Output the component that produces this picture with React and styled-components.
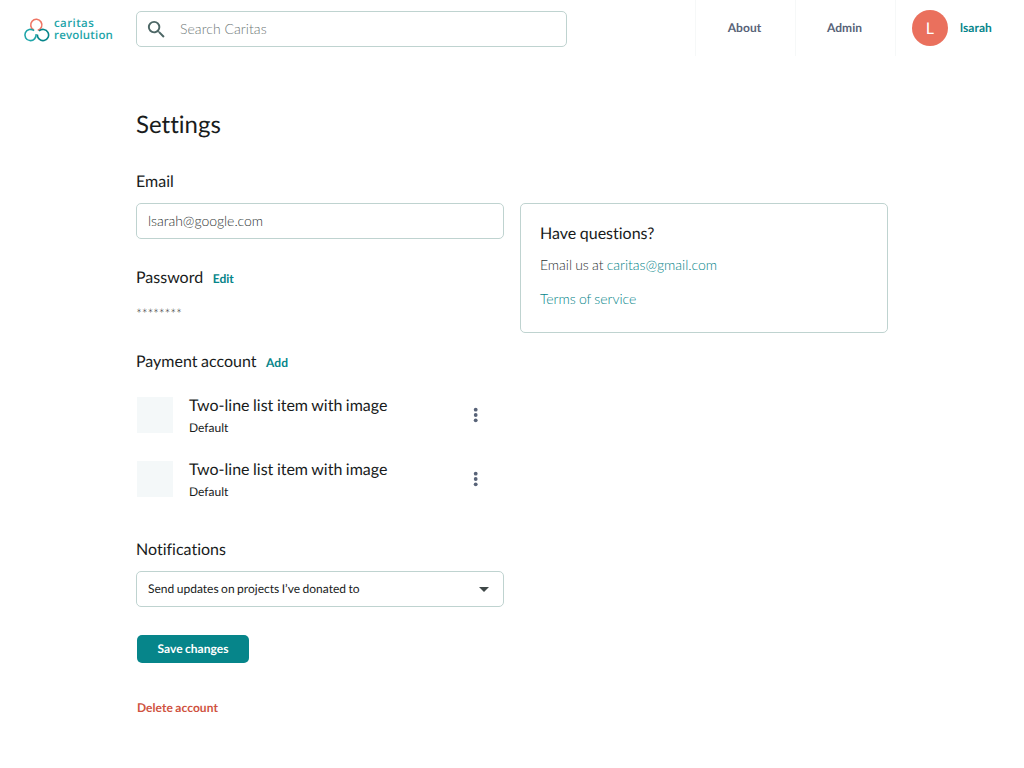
import React from 'react';
import styled, { createGlobalStyle } from 'styled-components';

const Global = createGlobalStyle`
  *, *::before, *::after { box-sizing: border-box; }
  body {
    margin: 0;
    background: #fff;
    color: #191c1c;
    font-family: Lato, "Liberation Sans", sans-serif;
    font-variant-ligatures: none;
    text-rendering: geometricPrecision;
    word-spacing: -0.55px;
  }
  a { text-decoration: none; color: inherit; }
  button {
    font: inherit;
    font-variant-ligatures: none;
    border: 0;
    padding: 0;
    background: none;
    cursor: pointer;
    text-rendering: inherit;
    word-spacing: inherit;
  }
  h1, h2, p, ul { margin: 0; padding: 0; font-weight: 400; }
`;

const Page = styled.div`
  width: 1024px;
  height: 768px;
  overflow: hidden;
`;

const Header = styled.header`
  display: flex;
  align-items: flex-start;
  height: 56px;
`;

const Brand = styled.a`
  display: flex;
  width: 136px;
  padding: 17px 0 0 23px;
  gap: 4px;
`;

const BrandMark = styled.svg`
  width: 27px;
  height: 26px;
`;

const BrandName = styled.span`
  display: block;
  height: 12px;
  font-family: "Open Sans", sans-serif;
  font-size: 11.5px;
  font-weight: 600;
  line-height: 13px;
  letter-spacing: ${(p) => p.$spacing};
  color: #1ea5a9;
`;

const Search = styled.label`
  display: flex;
  align-items: center;
  width: 431px;
  height: 36px;
  margin-top: 11px;
  padding-left: 8px;
  gap: 12px;
  border: 1px solid #bfd3d0;
  border-radius: 5px;
`;

const TextInput = styled.input`
  flex: 1;
  min-width: 0;
  height: 100%;
  padding: 0 0 2px;
  border: 0;
  outline: 0;
  background: none;
  font: 300 14px/20px Lato, sans-serif;
  letter-spacing: ${(p) => p.$spacing || 'normal'};
  text-rendering: inherit;
  color: #2f3636;
  &::placeholder { color: #6f7979; opacity: 1; }
`;

const Nav = styled.nav`
  display: flex;
  height: 56px;
  margin-left: auto;
`;

const NavItem = styled.a`
  display: flex;
  align-items: center;
  justify-content: center;
  width: 100px;
  padding: 0 2px 2px 0;
  border-left: 1px solid #f6f8f8;
  font-size: 12px;
  font-weight: 700;
  letter-spacing: 0.05px;
  color: #586378;
`;

const Account = styled(NavItem)`
  justify-content: flex-start;
  width: 129px;
  padding: 0 0 0 16px;
  gap: 12px;
  color: #06858a;
`;

const AccountName = styled.span`
  padding-bottom: 2px;
`;

const Avatar = styled.span`
  display: grid;
  place-items: center;
  width: 36px;
  height: 36px;
  border-radius: 50%;
  background: #ea705d;
  color: #fff;
  font-size: 16px;
  font-weight: 400;
`;

const Main = styled.main`
  padding: 53px 136px 0;
`;

const Title = styled.h1`
  font-size: 24px;
  line-height: 32px;
`;

const Columns = styled.div`
  display: grid;
  grid-template-columns: 368px 368px;
  gap: 16px;
  align-items: start;
  margin-top: 28px;
`;

const Section = styled.section`
  margin-bottom: ${(p) => p.$after}px;
`;

const SectionHead = styled.div`
  display: flex;
  align-items: baseline;
  height: 24px;
  gap: 9.5px;
`;

const Heading = styled.h2`
  height: 24px;
  font-size: 16px;
  line-height: 26px;
`;

const TextButton = styled.button`
  font-size: 12px;
  font-weight: 700;
  line-height: 20px;
  letter-spacing: 0.05px;
  color: ${(p) => (p.$danger ? '#cf5341' : '#06858a')};
`;

const Field = styled.div`
  display: flex;
  align-items: center;
  justify-content: space-between;
  height: 36px;
  margin-top: 10px;
  padding: 0 7px 0 11px;
  border: 1px solid #bfd3d0;
  border-radius: 5px;
  font-size: 12px;
`;

const FieldValue = styled.span`
  padding-bottom: 2px;
`;

const Masked = styled.p`
  margin-top: 13px;
  font-size: 14px;
  font-weight: 300;
  line-height: 24px;
  letter-spacing: -0.25px;
  color: #191c1c;
`;

const AccountList = styled.ul`
  display: grid;
  gap: 20px;
  margin-top: 20px;
  list-style: none;
`;

const AccountRow = styled.li`
  display: flex;
  align-items: center;
  height: 44px;
  padding: 0 16px 0 1px;
`;

const Thumb = styled.div`
  width: 36px;
  height: 36px;
  margin-right: 16px;
  background: #f4f8f9;
`;

const RowText = styled.div`
  flex: 1;
`;

const RowNote = styled.p`
  height: 20px;
  font-size: 12px;
  line-height: 22px;
`;

const IconButton = styled.button`
  display: flex;
  color: #586378;
`;

const SaveButton = styled.button`
  display: block;
  width: 112px;
  height: 28px;
  margin: 0 0 35px 1px;
  padding-bottom: 2px;
  border-radius: 5px;
  background: #06858a;
  color: #fff;
  font-size: 12px;
  font-weight: 700;
  letter-spacing: 0.02px;
`;

const DeleteRow = styled.div`
  display: flex;
  padding-left: 1px;
`;

const Help = styled.aside`
  height: 130px;
  margin-top: 34px;
  padding: 17px 19px;
  border: 1px solid #bfd3d0;
  border-radius: 5px;
`;

const HelpText = styled.p`
  margin-top: ${(p) => p.$before}px;
  font-size: 14px;
  font-weight: 300;
  line-height: 20px;
  letter-spacing: -0.03px;
  color: #2f3636;
  a { color: #06858a; }
`;

const SearchIcon = () => (
  <svg width="23" height="23" viewBox="0 0 24 24" fill="#4c6665">
    <path d="M15.5 14h-.79l-.28-.27A6.47 6.47 0 0 0 16 9.5 6.5 6.5 0 1 0 9.5 16c1.61 0 3.09-.59 4.23-1.57l.27.28v.79l5 4.99L20.49 19l-4.99-5zm-6 0C7.01 14 5 11.99 5 9.5S7.01 5 9.5 5 14 7.01 14 9.5 11.99 14 9.5 14z" />
  </svg>
);

const MoreIcon = () => (
  <svg width="24" height="24" viewBox="0 0 24 24" fill="currentColor">
    <circle cx="11.7" cy="6.7" r="1.9" />
    <circle cx="11.7" cy="12" r="1.9" />
    <circle cx="11.7" cy="17.3" r="1.9" />
  </svg>
);

const CaretIcon = () => (
  <svg width="24" height="24" viewBox="0 0 24 24" fill="#3f4848">
    <path d="M7 10l5 5 5-5z" />
  </svg>
);

const AccountItem = ({ title, note }) => (
  <AccountRow>
    <Thumb />
    <RowText>
      <Heading as="p">{title}</Heading>
      <RowNote>{note}</RowNote>
    </RowText>
    <IconButton aria-label="More options"><MoreIcon /></IconButton>
  </AccountRow>
);

export default function App() {
  return (
    <Page>
      <Global />
      <Header>
        <Brand href="#">
          <BrandMark viewBox="0 0 27 26" fill="none" strokeWidth="1.6">
            <path d="M10.93 12.98A5.6 5.6 0 1 1 14.75 13.31" stroke="#ef7564" />
            <path d="M13.01 17.03A5.6 5.6 0 1 1 11.1 13.71" stroke="#1ea5a9" />
            <path d="M16.04 14.04A5.6 5.6 0 1 1 14.42 17.51" stroke="#06858a" />
          </BrandMark>
          <div>
            <BrandName $spacing="0.4px">caritas</BrandName>
            <BrandName $spacing="0.17px">revolution</BrandName>
          </div>
        </Brand>
        <Search>
          <SearchIcon />
          <TextInput placeholder="Search Caritas" $spacing="0.05px" />
        </Search>
        <Nav>
          <NavItem href="#">About</NavItem>
          <NavItem href="#">Admin</NavItem>
          <Account href="#">
            <Avatar>L</Avatar>
            <AccountName>lsarah</AccountName>
          </Account>
        </Nav>
      </Header>
      <Main>
        <Title>Settings</Title>
        <Columns>
          <div>
            <Section $after={26}>
              <Heading>Email</Heading>
              <Field><TextInput defaultValue="lsarah@google.com" $spacing="-0.04px" /></Field>
            </Section>
            <Section $after={23}>
              <SectionHead>
                <Heading>Password</Heading>
                <TextButton>Edit</TextButton>
              </SectionHead>
              <Masked>********</Masked>
            </Section>
            <Section $after={36}>
              <SectionHead>
                <Heading>Payment account</Heading>
                <TextButton>Add</TextButton>
              </SectionHead>
              <AccountList>
                <AccountItem title="Two-line list item with image" note="Default" />
                <AccountItem title="Two-line list item with image" note="Default" />
              </AccountList>
            </Section>
            <Section $after={28}>
              <Heading>Notifications</Heading>
              <Field>
                <FieldValue>Send updates on projects I’ve donated to</FieldValue>
                <CaretIcon />
              </Field>
            </Section>
            <SaveButton>Save changes</SaveButton>
            <DeleteRow><TextButton $danger>Delete account</TextButton></DeleteRow>
          </div>
          <Help>
            <Heading>Have questions?</Heading>
            <HelpText $before={10}>Email us at <a href="#">caritas@gmail.com</a></HelpText>
            <HelpText $before={14}><a href="#">Terms of service</a></HelpText>
          </Help>
        </Columns>
      </Main>
    </Page>
  );
}
